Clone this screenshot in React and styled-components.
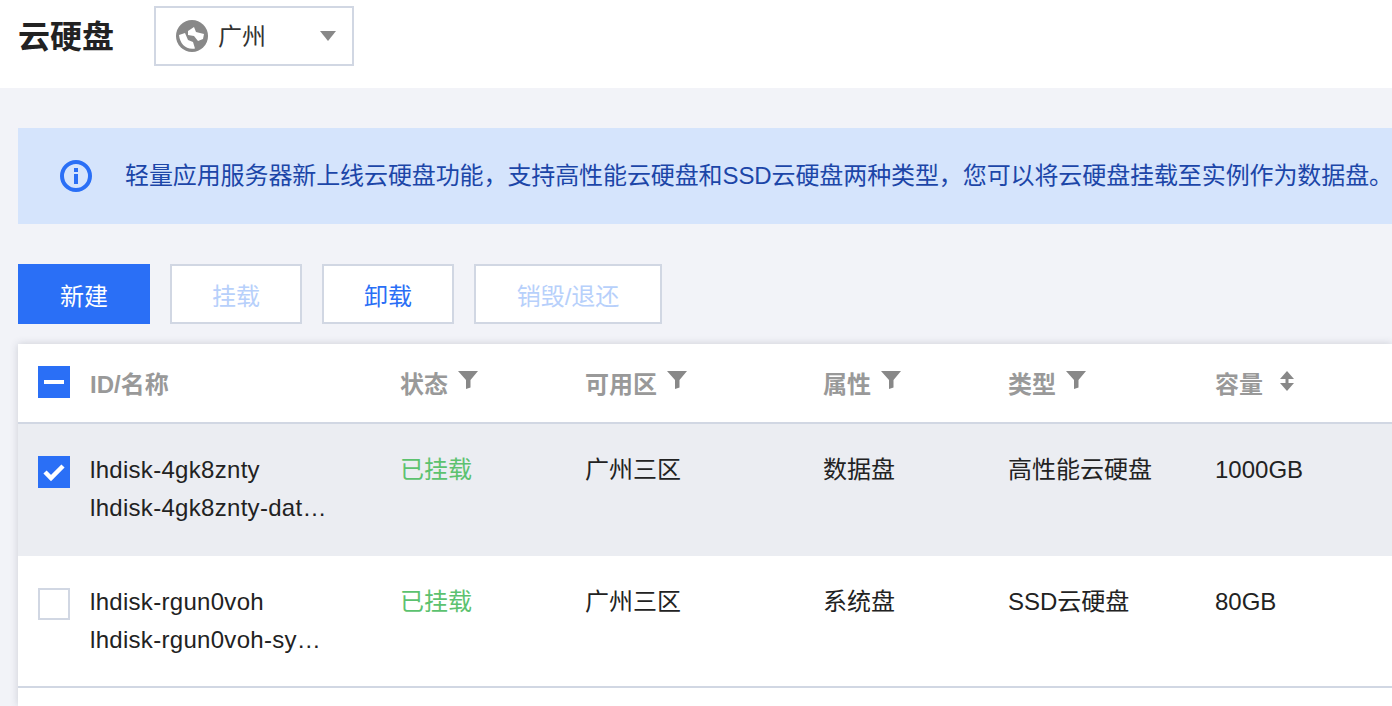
import React from 'react';
import styled, { createGlobalStyle } from 'styled-components';

const GlobalStyle = createGlobalStyle`
  html, body {
    margin: 0;
    padding: 0;
    height: 100%;
    overflow: hidden;
    background: #f2f3f8;
    font-family: "Liberation Sans", "Noto Sans CJK SC", sans-serif;
  }
`;

const COLUMNS = '52px 310px 185px 238px 185px 207px 1fr';

const disks = [
  {
    id: 'lhdisk-4gk8znty',
    name: 'lhdisk-4gk8znty-dat…',
    status: '已挂载',
    zone: '广州三区',
    attr: '数据盘',
    type: '高性能云硬盘',
    size: '1000GB',
    selected: true,
  },
  {
    id: 'lhdisk-rgun0voh',
    name: 'lhdisk-rgun0voh-sy…',
    status: '已挂载',
    zone: '广州三区',
    attr: '系统盘',
    type: 'SSD云硬盘',
    size: '80GB',
    selected: false,
  },
];

const FilterIcon = () => (
  <HeadIcon width="20" height="18" viewBox="0 0 20 18">
    <path d="M0 0h20l-7.5 9v7.5L8 18V9z" fill="#888" />
  </HeadIcon>
);

const SortIcon = () => (
  <HeadIcon $sort width="16" height="20" viewBox="0 0 16 20">
    <path d="M8 0l7 8H1zM1 12h14l-7 8z" fill="#888" />
    <rect x="6.5" y="8" width="3" height="4" fill="#888" />
  </HeadIcon>
);

const App = () => (
  <Page>
    <GlobalStyle />
    <Header>
      <Title>云硬盘</Title>
      <RegionSelect>
        <NoShrinkSvg width="32" height="32" viewBox="0 0 32 32">
          <circle cx="16" cy="16" r="16" fill="#888" />
          <path
            d="M3 15l6-2 3 7 5 2 2 6.500C10 30 4 24 3 15zM12 11l6-4 2 5 8 2-1 5-5 2-4-5-6-1z"
            fill="#fff"
          />
        </NoShrinkSvg>
        <RegionName>广州</RegionName>
        <Caret />
      </RegionSelect>
    </Header>

    <Content>
      <Notice>
        <NoShrinkSvg width="32" height="32" viewBox="0 0 32 32">
          <circle cx="16" cy="16" r="14" fill="none" stroke="#2a6ff6" strokeWidth="4" />
          <rect x="14" y="8" width="4" height="4" fill="#2a6ff6" />
          <rect x="14" y="14" width="4" height="10" fill="#2a6ff6" />
        </NoShrinkSvg>
        <NoticeText>
          轻量应用服务器新上线云硬盘功能，支持高性能云硬盘和SSD云硬盘两种类型，您可以将云硬盘挂载至实例作为数据盘。
        </NoticeText>
      </Notice>

      <Toolbar>
        <Button $primary>新建</Button>
        <Button disabled>挂载</Button>
        <Button>卸载</Button>
        <Button disabled $wide>
          销毁/退还
        </Button>
      </Toolbar>

      <Table>
        <HeadRow>
          <Check $checked>
            <Dash />
          </Check>
          <HeadCell>ID/名称</HeadCell>
          <HeadCell>
            状态
            <FilterIcon />
          </HeadCell>
          <HeadCell>
            可用区
            <FilterIcon />
          </HeadCell>
          <HeadCell>
            属性
            <FilterIcon />
          </HeadCell>
          <HeadCell>
            类型
            <FilterIcon />
          </HeadCell>
          <HeadCell $wideGap>
            容量
            <SortIcon />
          </HeadCell>
        </HeadRow>

        {disks.map(disk => (
          <Row key={disk.id} $selected={disk.selected}>
            <CheckCell>
              <Check $checked={disk.selected}>
                {disk.selected && (
                  <svg width="32" height="32" viewBox="0 0 32 32">
                    <path d="M7 16l6 6L25 10" fill="none" stroke="#fff" strokeWidth="4.500" />
                  </svg>
                )}
              </Check>
            </CheckCell>
            <Cell>
              <DiskName>{disk.id}</DiskName>
              <DiskName>{disk.name}</DiskName>
            </Cell>
            <Cell $green>{disk.status}</Cell>
            <Cell>{disk.zone}</Cell>
            <Cell>{disk.attr}</Cell>
            <Cell>{disk.type}</Cell>
            <Cell>{disk.size}</Cell>
          </Row>
        ))}
      </Table>
    </Content>
  </Page>
);

const Page = styled.div`
  width: 1392px;
  height: 706px;
  overflow: hidden;
  background: #f2f3f8;
`;

const Header = styled.header`
  display: flex;
  align-items: center;
  height: 88px;
  padding: 0 0 16px 18px;
  box-sizing: border-box;
  background: #fff;
`;

const Title = styled.h1`
  width: 136px;
  margin: 2px 0 0;
  font-size: 32px;
  line-height: 60px;
  font-weight: 700;
  color: #222;
`;

const NoShrinkSvg = styled.svg`
  flex-shrink: 0;
`;

const RegionSelect = styled.div`
  display: flex;
  align-items: center;
  width: 200px;
  height: 60px;
  padding: 0 16px 0 20px;
  box-sizing: border-box;
  border: 2px solid #d1d7e3;
  background: #fff;
`;

const RegionName = styled.span`
  margin: -4px 0 0 10px;
  flex: 1;
  font-size: 24px;
  color: #333;
`;

const Caret = styled.span`
  width: 0;
  height: 0;
  border-left: 8px solid transparent;
  border-right: 8px solid transparent;
  border-top: 10px solid #888;
`;

const Content = styled.main`
  padding: 40px 0 0 18px;
`;

const Notice = styled.div`
  display: flex;
  align-items: center;
  height: 96px;
  padding-left: 42px;
  box-sizing: border-box;
  background: #d5e4fc;
`;

const NoticeText = styled.p`
  margin: 0 0 0 33px;
  font-size: 24px;
  line-height: 36px;
  letter-spacing: -0.1px;
  white-space: nowrap;
  color: #1c46a8;
`;

const Toolbar = styled.div`
  display: flex;
  gap: 20px;
  margin: 40px 0 20px;
`;

const Button = styled.button`
  width: ${p => (p.$wide ? '188px' : '132px')};
  height: 60px;
  padding: 0;
  box-sizing: border-box;
  border: ${p => (p.$primary ? 'none' : '2px solid #d1d7e3')};
  background: ${p => (p.$primary ? '#2a6ff6' : '#fff')};
  color: ${p => (p.$primary ? '#fff' : '#2a6ff6')};
  font-family: inherit;
  font-size: 24px;

  &:disabled {
    color: #b7d0fb;
  }
`;

const Table = styled.section`
  height: 362px;
  background: #fff;
  box-shadow: 0 0 8px rgba(54, 58, 80, 0.2);
`;

const HeadRow = styled.div`
  display: grid;
  grid-template-columns: ${COLUMNS};
  align-items: center;
  height: 80px;
  padding: 0 0 2px 20px;
  box-sizing: border-box;
  border-bottom: 2px solid #d1d7e3;
`;

const HeadCell = styled.div`
  display: flex;
  align-items: center;
  gap: ${p => (p.$wideGap ? '16px' : '10px')};
  font-size: 24px;
  font-weight: 700;
  color: #999;
`;

const HeadIcon = styled.svg`
  margin-top: ${p => (p.$sort ? '-3px' : '-4px')};
`;

const Row = styled.div`
  display: grid;
  grid-template-columns: ${COLUMNS};
  height: 132px;
  padding: 27px 0 0 20px;
  box-sizing: border-box;
  background: ${p => (p.$selected ? '#ebedf2' : '#fff')};
  border-bottom: ${p => (p.$selected ? 'none' : '2px solid #d1d7e3')};
`;

const CheckCell = styled.div`
  padding-top: 5px;
`;

const Check = styled.span`
  display: flex;
  align-items: center;
  justify-content: center;
  width: 32px;
  height: 32px;
  box-sizing: border-box;
  border: ${p => (p.$checked ? 'none' : '2px solid #d1d7e3')};
  background: ${p => (p.$checked ? '#2a6ff6' : '#fff')};
`;

const Dash = styled.span`
  width: 20px;
  height: 4px;
  background: #fff;
`;

const Cell = styled.div`
  min-width: 0;
  font-size: 24px;
  line-height: 38px;
  color: ${p => (p.$green ? '#5cc26f' : '#222')};
`;

const DiskName = styled.div`
  letter-spacing: 0.3px;
  white-space: nowrap;
`;

export default App;
